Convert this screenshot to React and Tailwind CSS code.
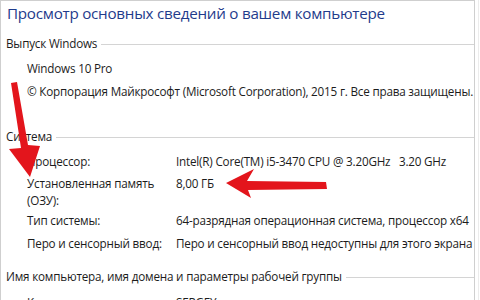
const rows = [
  { label: 'Процессор:', value: 'Intel(R) Core(TM) i5-3470 CPU @ 3.20GHz\u00a0\u00a0 3.20 GHz' },
  { label: ['Установленная память', '(ОЗУ):'], value: '8,00 ГБ', tall: true },
  { label: 'Тип системы:', value: '64-разрядная операционная система, процессор x64' },
  { label: 'Перо и сенсорный ввод:', value: 'Перо и сенсорный ввод недоступны для этого экрана' },
];

const SectionHeader = ({ title, className = '' }) => (
  <div className={`flex items-center h-[18px] ${className}`}>
    <span className="pl-[6px] pr-[4px] whitespace-nowrap">{title}</span>
    <div className="flex-1 border-t border-[#d4d4d4]" />
  </div>
);

const Arrows = () => (
  <svg className="absolute inset-0 pointer-events-none" width="480" height="300" viewBox="0 0 480 300">
    <polygon
      fill="#e3151c"
      points="11,83 17,82 28,145 40,146 30,177 9,149 21,148"
    />
    <polygon
      fill="#e3151c"
      points="226,183 254,169 247,181 326,182 327,189 248,190 251,198"
    />
  </svg>
);

const App = () => {
  return (
    <div
      className="relative w-[480px] h-[300px] overflow-hidden bg-white text-[#1c1c1c] text-[11.7px] tracking-[-0.2px]"
      style={{ fontFamily: '"Open Sans", "Noto Sans", sans-serif' }}
    >
      <div className="absolute inset-y-0 left-0 w-[475px] border-t border-l border-r border-[#cfcfcf]" />
      <div className="absolute top-0 bottom-0 right-[1px] w-px bg-[#ececec]" />

      <div className="w-[475px]">
        <h1 className="h-[26px] leading-[26px] pl-[7px] text-[15.2px] tracking-[-0.25px] text-[#1f3b8c] whitespace-nowrap">
          Просмотр основных сведений о вашем компьютере
        </h1>

        <SectionHeader title="Выпуск Windows" className="mt-[9px]" />
        <div className="mt-[4px] pl-[27px] leading-[23px] whitespace-nowrap">
          <div>Windows 10 Pro</div>
          <div>© Корпорация Майкрософт (Microsoft Corporation), 2015 г. Все права защищены.</div>
        </div>

        <SectionHeader title="Система" className="mt-[25px]" />
        <div className="mt-[4px] pl-[27px]">
          {rows.map((row) => (
            <div key={row.value} className={`flex leading-[17px] whitespace-nowrap ${row.tall ? 'pt-[2px]' : 'py-[3px]'}`}>
              <div className="w-[149px] pr-[4px]">
                {Array.isArray(row.label) ? row.label.map((l) => <div key={l}>{l}</div>) : row.label}
              </div>
              <div>{row.value}</div>
            </div>
          ))}
        </div>

        <SectionHeader title="Имя компьютера, имя домена и параметры рабочей группы" className="mt-[13px]" />
        <div className="mt-[5px] pl-[27px] flex leading-[23px] whitespace-nowrap">
          <div className="w-[149px]">Компьютер:</div>
          <div>SERGEY</div>
        </div>
      </div>

      <Arrows />
    </div>
  );
};

export default App;
